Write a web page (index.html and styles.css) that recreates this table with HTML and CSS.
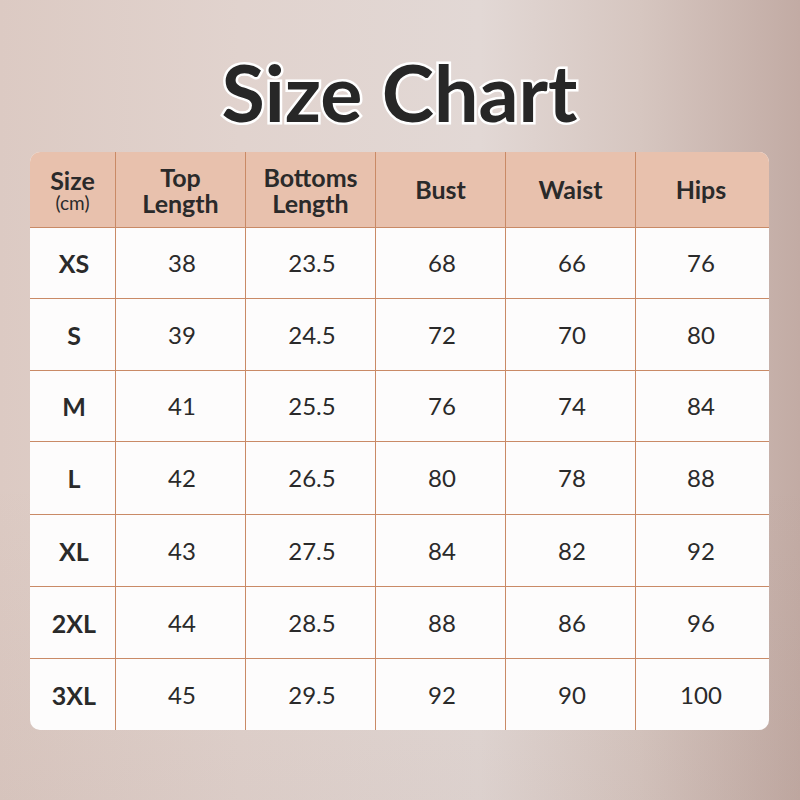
FILE: index.html
```html
<!DOCTYPE html>
<html>
<head>
<meta charset="utf-8">
<link rel="stylesheet" href="styles.css">
</head>
<body>
<div class="page">
  <h1 class="title">Size Chart</h1>
  <div class="chart">
    <div class="cell head"><div><div>Size</div><div class="unit">(cm)</div></div></div>
    <div class="cell head">Top<br>Length</div>
    <div class="cell head">Bottoms<br>Length</div>
    <div class="cell head up">Bust</div>
    <div class="cell head up">Waist</div>
    <div class="cell head up">Hips</div>

    <div class="cell size">XS</div><div class="cell">38</div><div class="cell">23.5</div><div class="cell">68</div><div class="cell">66</div><div class="cell">76</div>
    <div class="cell size">S</div><div class="cell">39</div><div class="cell">24.5</div><div class="cell">72</div><div class="cell">70</div><div class="cell">80</div>
    <div class="cell size">M</div><div class="cell">41</div><div class="cell">25.5</div><div class="cell">76</div><div class="cell">74</div><div class="cell">84</div>
    <div class="cell size">L</div><div class="cell">42</div><div class="cell">26.5</div><div class="cell">80</div><div class="cell">78</div><div class="cell">88</div>
    <div class="cell size">XL</div><div class="cell">43</div><div class="cell">27.5</div><div class="cell">84</div><div class="cell">82</div><div class="cell">92</div>
    <div class="cell size">2XL</div><div class="cell">44</div><div class="cell">28.5</div><div class="cell">88</div><div class="cell">86</div><div class="cell">96</div>
    <div class="cell size">3XL</div><div class="cell">45</div><div class="cell">29.5</div><div class="cell">92</div><div class="cell">90</div><div class="cell">100</div>
  </div>
</div>
</body>
</html>
```

FILE: styles.css
```css
html, body {
  margin: 0;
  padding: 0;
}
.page {
  width: 800px;
  height: 800px;
  box-sizing: border-box;
  padding: 0 31px 0 30px;
  display: flex;
  flex-direction: column;
  align-items: stretch;
  font-family: Lato, "Open Sans", sans-serif;
  color: #2a2a2a;
  background:
    linear-gradient(180deg, rgba(255,255,255,0) 60%, rgba(120,90,80,0.06) 100%),
    linear-gradient(90deg, #dccac3 0%, #e1d3ce 30%, #e2d8d5 60%, #d6c6c0 80%, #c2aba4 100%);
}
.title {
  margin: 0;
  height: 152px;
  display: flex;
  align-items: center;
  justify-content: center;
  font-size: 79px;
  font-weight: 700;
  color: #272727;
  -webkit-text-stroke: 5px #ffffff;
  paint-order: stroke fill;
  padding-top: 30px;
  box-sizing: border-box;
}
.chart {
  display: grid;
  grid-template-columns: 85px 130px 130px 130px 130px 134px;
  grid-template-rows: 75px 71px 72px 71px 73px 72px 72px 72px;
  background: #fdfcfc;
  border-radius: 10px;
  overflow: hidden;
}
.cell {
  display: flex;
  align-items: center;
  justify-content: center;
  text-align: center;
  font-size: 24px;
  line-height: 26px;
  padding-left: 3px;
  border-left: 1px solid #c98a66;
  border-top: 1px solid #c98a66;
  box-sizing: border-box;
}
.cell:nth-child(6n+1) {
  border-left: none;
}
.cell:nth-child(6n) {
  padding-left: 0;
  padding-right: 3px;
}
.head {
  background: #e8c1ad;
  border-top: none;
  font-size: 25px;
  font-weight: 700;
  padding-left: 0;
  padding-top: 1px;
}
.head.up {
  padding-top: 0;
  padding-bottom: 1px;
}
.unit {
  font-size: 19px;
  font-weight: 400;
  line-height: 20px;
}
.size {
  font-size: 25px;
  font-weight: 700;
}
```
